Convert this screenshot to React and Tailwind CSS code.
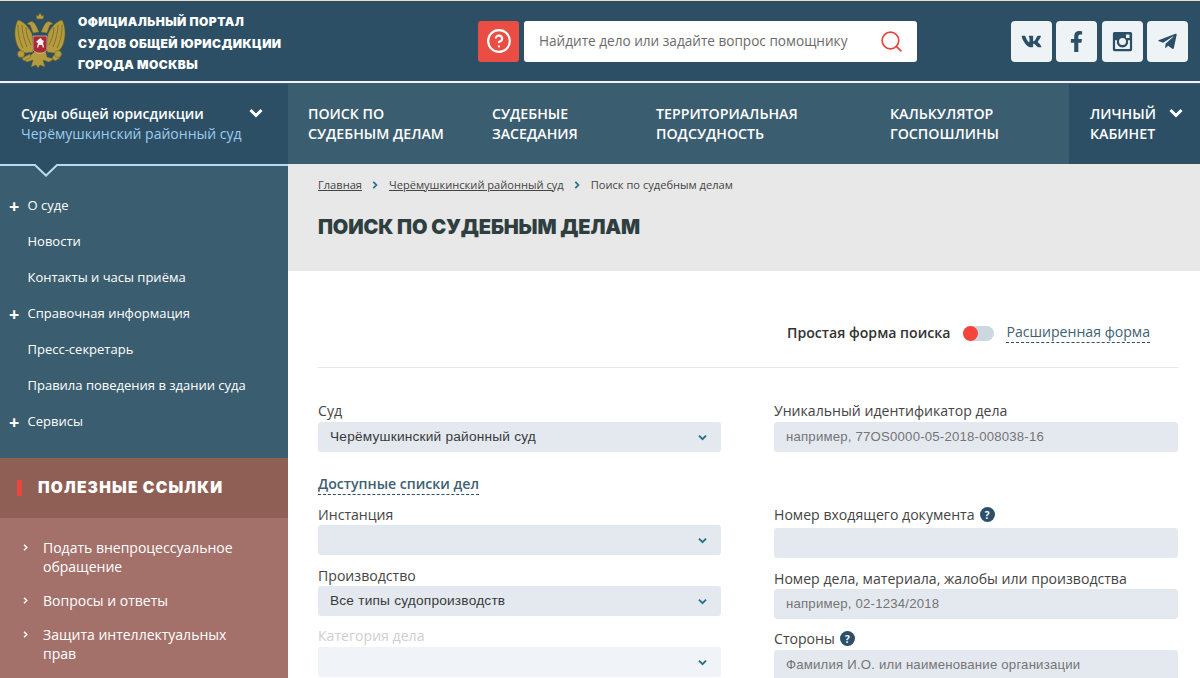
import React from "react";
import { Search, CircleHelp } from "lucide-react";
import { FaVk, FaFacebookF, FaTelegramPlane } from "react-icons/fa";

const sideLinks = [
  { label: "О суде", plus: true },
  { label: "Новости" },
  { label: "Контакты и часы приёма" },
  { label: "Справочная информация", plus: true },
  { label: "Пресс-секретарь" },
  { label: "Правила поведения в здании суда" },
  { label: "Сервисы", plus: true },
];

const useful = [
  ["Подать внепроцессуальное", "обращение"],
  ["Вопросы и ответы"],
  ["Защита интеллектуальных", "прав"],
];

function Chevron({ className }) {
  return (
    <svg viewBox="0 0 14 10" className={className} fill="none" stroke="currentColor" strokeWidth="3">
      <path d="M1.5 2 7 7.5 12.5 2" />
    </svg>
  );
}

function Emblem() {
  return (
    <svg viewBox="0 0 52 58" className="h-[58px] w-[52px] shrink-0">
      <g fill="#b49c3e" stroke="#6f5e22" strokeWidth="0.5">
        {/* crown */}
        <path d="M23 7l-1-4 2 1 2-3 2 3 2-1-1 4z" />
        {/* heads */}
        <path d="M25 20c-2-4-3-8-6-10-2-1-4 0-6 2l3 1c1 2 2 5 3 8z" />
        <path d="M27 20c2-4 3-8 6-10 2-1 4 0 6 2l-3 1c-1 2-2 5-3 8z" />
        {/* wings */}
        <path d="M18 22C14 13 8 9 4 8 1 13 0 22 2 29c1 6 5 11 10 12l7-1z" />
        <path d="M34 22c4-9 10-13 14-14 3 5 4 14 2 21-1 6-5 11-10 12l-7-1z" />
        {/* tail and legs */}
        <path d="M20 40h12l1 5 7 2-5 3-6-2 2 7-5-2-2 3-2-3-5 2 2-7-6 2-5-3 7-2z" />
        <circle cx="7" cy="42" r="3.500" />
        <path d="M8 46l2 3 7-4-1-3zM44 42l-4 1-2 3 3 3 5-3z" />
        <circle cx="44" cy="42" r="3.500" />
      </g>
      <g fill="none" stroke="#6f5e22" strokeWidth="0.7">
        <path d="M4 13c0 8 1 15 5 23M8 13c0 7 2 14 5 22M12 15c0 6 2 12 5 18" />
        <path d="M48 13c0 8-1 15-5 23M44 13c0 7-2 14-5 22M40 15c0 6-2 12-5 18" />
      </g>
      <path d="M19 24h14v13c0 2-3 4-7 4s-7-2-7-4z" fill="#a82a32" stroke="#e8e0c8" strokeWidth="0.6" />
      <path d="M25 27l2-1 1 2 2 1-1 2 1 4-1 1-1-3h-3l-1 3-1-1 1-4-2-1 2-2z" fill="#efefef" />
    </svg>
  );
}

function InstagramOld() {
  return (
    <svg viewBox="0 0 24 24" className="h-[21px] w-[21px]" fill="#2b4f66">
      <path
        fillRule="evenodd"
        d="M3 1h18a2 2 0 0 1 2 2v18a2 2 0 0 1-2 2H3a2 2 0 0 1-2-2V3a2 2 0 0 1 2-2zm13 3v4h4V4zM3.500 10.500V20a.5.5 0 0 0 .5.5h16a.5.5 0 0 0 .5-.5v-9.500h-2.300a6.500 6.500 0 1 1-12.400 0zM12 8a4 4 0 1 0 0 8 4 4 0 0 0 0-8z"
      />
    </svg>
  );
}

function HelpDot() {
  return (
    <span className="ml-[5px] inline-flex h-[15px] w-[15px] items-center justify-center rounded-full bg-[#2c5069] text-[10px] font-bold leading-none text-white">
      ?
    </span>
  );
}

function FieldLabel({ children, muted, className = "h-[21px]" }) {
  return (
    <div className={`flex items-center text-[14.100px] ${className} ${muted ? "text-[#cfcfcf]" : "text-[#444]"}`}>
      {children}
    </div>
  );
}

function SelectBox({ value, muted }) {
  return (
    <div
      className={`flex h-[30px] items-center justify-between rounded-[3px] pl-3 pr-[14px] font-['Liberation_Sans',sans-serif] text-[13.700px] tracking-[0.2px] text-[#3a3a3a] ${
        muted ? "bg-[#f0f3f7]" : "bg-[#e4e9f0]"
      }`}
    >
      <span>{value}</span>
      <Chevron className="h-[7px] w-[9px] text-[#26708c]" />
    </div>
  );
}

function InputBox({ placeholder }) {
  return (
    <div className="flex h-[30px] items-center rounded-[3px] bg-[#e4e9f0] pl-3 font-['Liberation_Sans',sans-serif] text-[13.200px] tracking-[0.2px] text-[#757575]">
      {placeholder}
    </div>
  );
}

function Social({ children }) {
  return (
    <div className="flex h-[41px] w-[41px] items-center justify-center rounded-[4px] bg-[#eef3f6] text-[#2b4f66]">
      {children}
    </div>
  );
}

function NavItem({ width, lines }) {
  return (
    <div className={`flex flex-col justify-center pl-5 text-[14.200px] font-semibold leading-[20px] text-white ${width}`}>
      <span>{lines[0]}</span>
      <span>{lines[1]}</span>
    </div>
  );
}

export default function App() {
  return (
    <div className="flex h-[678px] w-[1200px] flex-col overflow-hidden bg-white font-['Open_Sans',sans-serif]">
      {/* top bar */}
      <div className="h-px bg-[#e9dfc4]" />
      <header className="flex h-[80px] items-center bg-[#2c4f66] pl-[14px] pr-3">
        <Emblem />
        <div className="ml-3 w-[400px] pt-[5px] font-['Inter',sans-serif] text-[12px] font-black leading-[21.500px] tracking-[0.45px] text-white">
          <div>ОФИЦИАЛЬНЫЙ ПОРТАЛ</div>
          <div>СУДОВ ОБЩЕЙ ЮРИСДИКЦИИ</div>
          <div>ГОРОДА МОСКВЫ</div>
        </div>
        <div className="flex h-[41px] w-[41px] items-center justify-center rounded-[3px] bg-[#e94d43]">
          <CircleHelp className="h-[26px] w-[26px] text-white" strokeWidth={2} />
        </div>
        <div className="ml-[5px] flex h-[41px] w-[393px] items-center justify-between rounded-[3px] bg-white pl-[15px] pr-[13px]">
          <span className="text-[13.600px] text-[#6b6b6b]">Найдите дело или задайте вопрос помощнику</span>
          <Search className="h-[25px] w-[25px] text-[#e5453b]" strokeWidth={1.6} />
        </div>
        <div className="ml-auto flex gap-[4.500px]">
          <Social><FaVk className="h-[21px] w-[21px]" /></Social>
          <Social><FaFacebookF className="h-[21px] w-[21px]" /></Social>
          <Social><InstagramOld /></Social>
          <Social><FaTelegramPlane className="h-[21px] w-[21px]" /></Social>
        </div>
      </header>
      <div className="h-[2px] bg-[#eef2f4]" />
      <div className="h-px bg-[#3b5d70]" />

      {/* main nav */}
      <nav className="flex h-[80px] bg-[#3b5d70]">
        <div className="relative w-[288px] bg-[#2c4f66] pl-[21px] pt-[20px] text-[14px] leading-[20px]">
          <div className="font-semibold text-white">Суды общей юрисдикции</div>
          <div className="text-[#9fcbea]">Черёмушкинский районный суд</div>
          <Chevron className="absolute left-[249px] top-[24px] h-[10px] w-[14px] text-white" />
        </div>
        <NavItem width="w-[184px]" lines={["ПОИСК ПО", "СУДЕБНЫМ ДЕЛАМ"]} />
        <NavItem width="w-[164px]" lines={["СУДЕБНЫЕ", "ЗАСЕДАНИЯ"]} />
        <NavItem width="w-[234px]" lines={["ТЕРРИТОРИАЛЬНАЯ", "ПОДСУДНОСТЬ"]} />
        <NavItem width="w-[199px]" lines={["КАЛЬКУЛЯТОР", "ГОСПОШЛИНЫ"]} />
        <div className="relative flex flex-1 flex-col justify-center bg-[#2c4f66] pl-[21px] text-[14.200px] font-semibold leading-[20px] text-white">
          <span>ЛИЧНЫЙ</span>
          <span>КАБИНЕТ</span>
          <Chevron className="absolute left-[100px] top-[24px] h-[10px] w-[14px] text-white" />
        </div>
      </nav>

      <div className="flex min-h-0 flex-1">
        {/* sidebar */}
        <aside className="relative w-[288px] shrink-0 bg-[#3b5d70]">
          <div className="h-[2px] bg-[#b9d9ef]" />
          <svg viewBox="0 0 26 14" className="absolute left-[33px] top-0 h-[14px] w-[26px]">
            <path d="M1 0 13 11 25 0z" fill="#2c4f66" />
            <path d="M0 1h2L13 11.500 24 1h2" fill="none" stroke="#b9d9ef" strokeWidth="2" />
          </svg>
          <div className="pt-[22px]">
            {sideLinks.map((item) => (
              <div key={item.label} className="relative flex h-9 items-center pl-[27.500px] text-[13px] text-white">
                {item.plus && <span className="absolute left-[9px] text-[18px] font-bold leading-none">+</span>}
                {item.label}
              </div>
            ))}
          </div>
          <div className="mt-[18px] flex h-[60px] items-center bg-[#8f5f56] pl-[17px]">
            <div className="h-[16px] w-[5px] bg-[#e8463c]" />
            <div className="ml-[16px] font-['Inter',sans-serif] text-[15.500px] font-black tracking-[1.2px] text-white">ПОЛЕЗНЫЕ ССЫЛКИ</div>
          </div>
          <div className="h-full bg-[#a3716a] pl-[23px] pt-[20px] text-[14px] leading-[19px] text-white">
            {useful.map((lines) => (
              <div key={lines[0]} className="relative mb-[15px] pl-[20px]">
                <Chevron className="absolute left-[-1px] top-[6px] h-[7px] w-[7px] -rotate-90" />
                {lines.map((line) => (
                  <div key={line}>{line}</div>
                ))}
              </div>
            ))}
          </div>
        </aside>

        {/* content */}
        <main className="min-w-0 flex-1">
          <div className="h-[107px] bg-[#e8e8e8] pl-[30px] pt-[13px]">
            <div className="flex h-[16px] items-center text-[11.100px] text-[#444]">
              <span className="underline">Главная</span>
              <Chevron className="mx-[9.500px] h-[8px] w-[8px] -rotate-90 text-[#26708c]" />
              <span className="underline">Черёмушкинский районный суд</span>
              <Chevron className="mx-[9.500px] h-[8px] w-[8px] -rotate-90 text-[#26708c]" />
              <span>Поиск по судебным делам</span>
            </div>
            <h1 className="mt-[20px] font-['Inter',sans-serif] text-[20px] font-black leading-[28px] tracking-[-0.150px] text-[#2f3f40]">
              ПОИСК ПО СУДЕБНЫМ ДЕЛАМ
            </h1>
          </div>

          <div className="px-[30px] pr-[22px]">
            <div className="flex h-[97px] items-end justify-end border-b border-[#e3e8ee] pb-[24px] pr-[28px] text-[14.100px]">
              <span className="font-semibold text-[#333]">Простая форма поиска</span>
              <span className="relative mb-[2px] ml-[13px] h-[15px] w-[31px] rounded-full bg-[#ccd8e0]">
                <span className="absolute left-0 top-0 h-[15px] w-[15px] rounded-full bg-[#f5443b]" />
              </span>
              <span className="ml-[12px] border-b border-dashed border-[#2c5069] text-[#3f5f73]">Расширенная форма</span>
            </div>

            <div className="grid grid-cols-[403px_404px] gap-x-[53px] pt-[33px]">
              <div>
                <FieldLabel className="h-[21px] pb-[2px]">Суд</FieldLabel>
                <SelectBox value="Черёмушкинский районный суд" />
                <div className="mt-[22px] h-[21px] w-fit border-b border-dashed border-[#2c5069] text-[14.100px] font-semibold leading-[20px] text-[#3f5f73]">
                  Доступные списки дел
                </div>
                <div className="mt-[9px]">
                  <FieldLabel>Инстанция</FieldLabel>
                  <SelectBox />
                </div>
                <div className="mt-[10px]">
                  <FieldLabel>Производство</FieldLabel>
                  <SelectBox value="Все типы судопроизводств" />
                </div>
                <div className="mt-[10px]">
                  <FieldLabel muted className="h-[21px] pb-[2px]">Категория дела</FieldLabel>
                  <SelectBox muted />
                </div>
              </div>
              <div>
                <FieldLabel className="h-[21px] pb-[2px]">Уникальный идентификатор дела</FieldLabel>
                <InputBox placeholder="например, 77OS0000-05-2018-008038-16" />
                <div className="mt-[52px]">
                  <FieldLabel className="h-[24px] pb-[3px]">Номер входящего документа<HelpDot /></FieldLabel>
                  <InputBox />
                </div>
                <div className="mt-[10px]">
                  <FieldLabel>Номер дела, материала, жалобы или производства</FieldLabel>
                  <InputBox placeholder="например, 02-1234/2018" />
                </div>
                <div className="mt-[10px]">
                  <FieldLabel className="h-[21px] pb-[2px]">Стороны<HelpDot /></FieldLabel>
                  <InputBox placeholder="Фамилия И.О. или наименование организации" />
                </div>
              </div>
            </div>
          </div>
        </main>
      </div>
    </div>
  );
}
